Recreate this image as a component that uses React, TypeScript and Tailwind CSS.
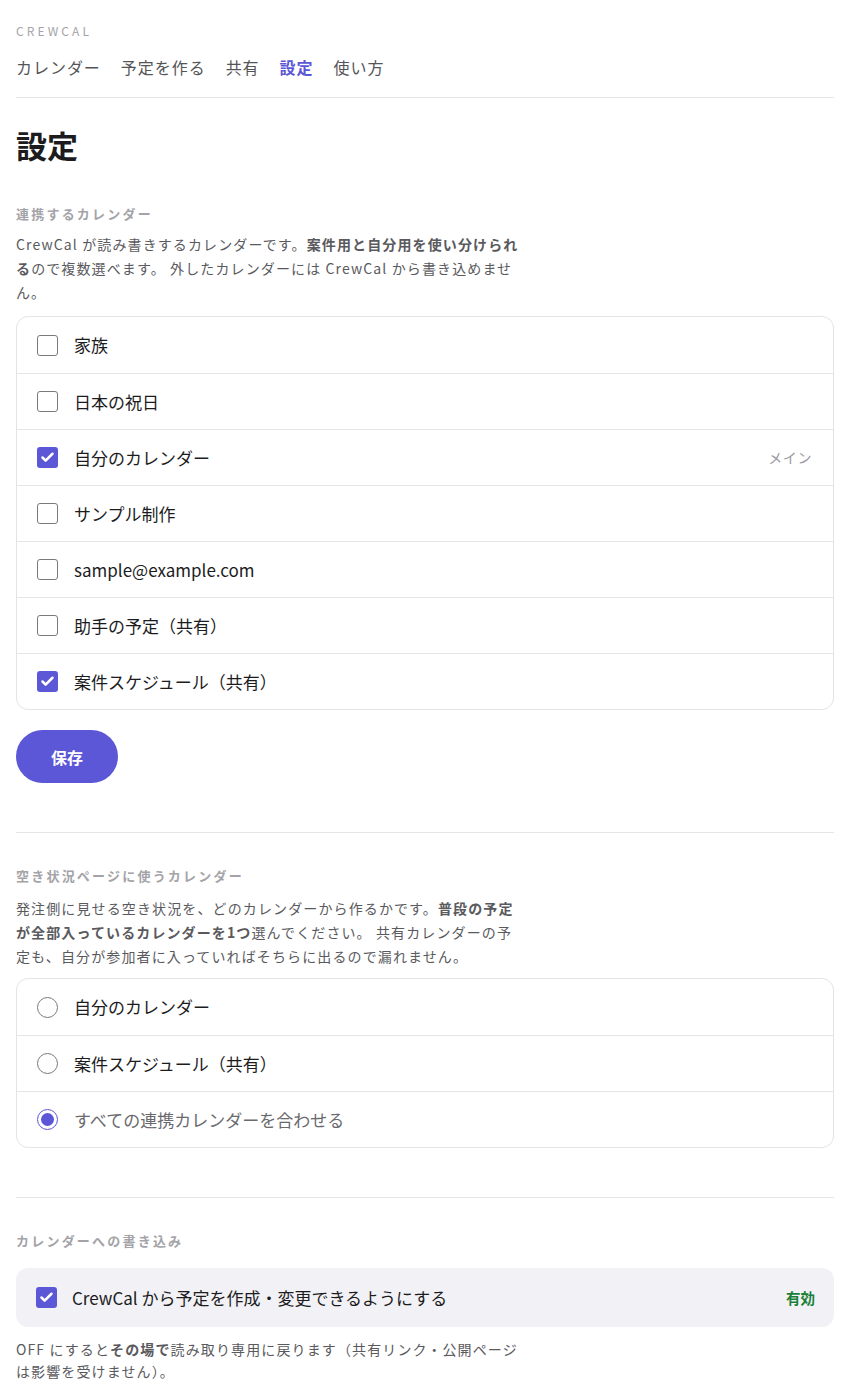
import { Check } from 'lucide-react';

const ACCENT = 'bg-[#5b57d6]';

const calendars = [
  { name: '家族', checked: false },
  { name: '日本の祝日', checked: false },
  { name: '自分のカレンダー', checked: true, tag: 'メイン' },
  { name: 'サンプル制作', checked: false },
  { name: 'sample@example.com', checked: false },
  { name: '助手の予定（共有）', checked: false },
  { name: '案件スケジュール（共有）', checked: true },
];

const sources = [
  { name: '自分のカレンダー', selected: false },
  { name: '案件スケジュール（共有）', selected: false },
  { name: 'すべての連携カレンダーを合わせる', selected: true },
];

function Box({ checked }: { checked: boolean }) {
  if (checked) {
    return (
      <span className={`w-[21px] h-[21px] rounded-[3px] ${ACCENT} flex items-center justify-center flex-shrink-0`}>
        <Check className="w-[15px] h-[15px] text-white" strokeWidth={4} />
      </span>
    );
  }
  return <span className="w-[21px] h-[21px] rounded-[3px] border-[1.5px] border-[#7a7a7a] bg-white flex-shrink-0" />;
}

function Radio({ selected }: { selected: boolean }) {
  return (
    <span
      className={
        'w-[21px] h-[21px] rounded-full border-[1.5px] flex items-center justify-center flex-shrink-0 ' +
        (selected ? 'border-[#5b57d6]' : 'border-[#7a7a7a]')
      }
    >
      {selected && <span className={`w-[13px] h-[13px] rounded-full ${ACCENT}`} />}
    </span>
  );
}

function SectionLabel({ children }: { children: React.ReactNode }) {
  return <h2 className="text-[13px] leading-5 font-bold tracking-[0.17em] text-[#a3a3a8]">{children}</h2>;
}

export default function App() {
  return (
    <div
      className="min-h-screen bg-white pl-4 pr-[21px] pt-[23px] pb-10 text-[#1c1c1e]"
      style={{ fontFamily: '"Noto Sans CJK JP", "Noto Sans", sans-serif' }}
    >
      {/* Header */}
      <div className="border-b border-[#e6e6ea] pb-[18px]">
        <div className="text-[12px] leading-4 tracking-[0.26em] text-[#a3a3a8]">CREWCAL</div>
        <nav className="mt-4 flex items-center gap-5 text-[16px] leading-6 tracking-[0.06em] text-[#555558]">
          <span>カレンダー</span>
          <span>予定を作る</span>
          <span>共有</span>
          <span className="font-bold text-[#5b57d6]">設定</span>
          <span>使い方</span>
        </nav>
      </div>

      <h1 className="mt-[29px] text-[31px] leading-9 font-bold">設定</h1>

      {/* Linked calendars */}
      <section className="mt-[41px]">
        <SectionLabel>連携するカレンダー</SectionLabel>
        <p className="mt-2 max-w-[504px] text-[14px] leading-6 tracking-[0.08em] text-[#5a5a5e]">
          CrewCal が読み書きするカレンダーです。<b className="font-bold">案件用と自分用を使い分けられる</b>ので複数選べます。 外したカレンダーには CrewCal から書き込めません。
        </p>
        <div className="mt-3 rounded-xl border border-[#e3e3e8] overflow-hidden">
          {calendars.map((c, i) => (
            <div
              key={c.name}
              className={
                'h-14 flex items-center gap-4 pl-5 pr-[21px] ' + (i > 0 ? 'border-t border-[#e6e6ea]' : '')
              }
            >
              <Box checked={c.checked} />
              <span className="flex-1 text-[17px]">{c.name}</span>
              {c.tag && <span className="text-[14px] tracking-[0.04em] text-[#9a9a9f]">{c.tag}</span>}
            </div>
          ))}
        </div>
        <button className={`mt-5 h-[53px] w-[102px] rounded-full ${ACCENT} text-white text-[16px] font-bold`}>
          保存
        </button>
      </section>

      <hr className="mt-[49px] border-[#e6e6ea]" />

      {/* Availability source */}
      <section className="mt-[33px]">
        <SectionLabel>空き状況ページに使うカレンダー</SectionLabel>
        <p className="mt-[10px] max-w-[504px] text-[14px] leading-6 tracking-[0.08em] text-[#5a5a5e]">
          発注側に見せる空き状況を、どのカレンダーから作るかです。<b className="font-bold">普段の予定が全部入っているカレンダーを1つ</b>選んでください。 共有カレンダーの予定も、自分が参加者に入っていればそちらに出るので漏れません。
        </p>
        <div className="mt-[10px] rounded-xl border border-[#e3e3e8] overflow-hidden">
          {sources.map((s, i) => (
            <div
              key={s.name}
              className={'h-14 flex items-center gap-4 pl-5 ' + (i > 0 ? 'border-t border-[#e6e6ea]' : '')}
            >
              <Radio selected={s.selected} />
              <span className={'text-[17px] ' + (s.selected ? 'text-[#6a6a6e]' : '')}>{s.name}</span>
            </div>
          ))}
        </div>
      </section>

      <hr className="mt-[49px] border-[#e6e6ea]" />

      {/* Write access */}
      <section className="mt-[33px]">
        <SectionLabel>カレンダーへの書き込み</SectionLabel>
        <div className="mt-[17px] h-[59px] rounded-xl bg-[#f2f2f6] flex items-center gap-[15px] pl-5 pr-[19px]">
          <Box checked />
          <span className="flex-1 text-[17px]">CrewCal から予定を作成・変更できるようにする</span>
          <span className="text-[14.5px] font-bold text-[#1a7f37]">有効</span>
        </div>
        <p className="mt-[11px] max-w-[504px] text-[14px] leading-[22px] tracking-[0.08em] text-[#5a5a5e]">
          OFF にすると<b className="font-bold">その場で</b>読み取り専用に戻ります（共有リンク・公開ページは影響を受けません）。
        </p>
      </section>
    </div>
  );
}
